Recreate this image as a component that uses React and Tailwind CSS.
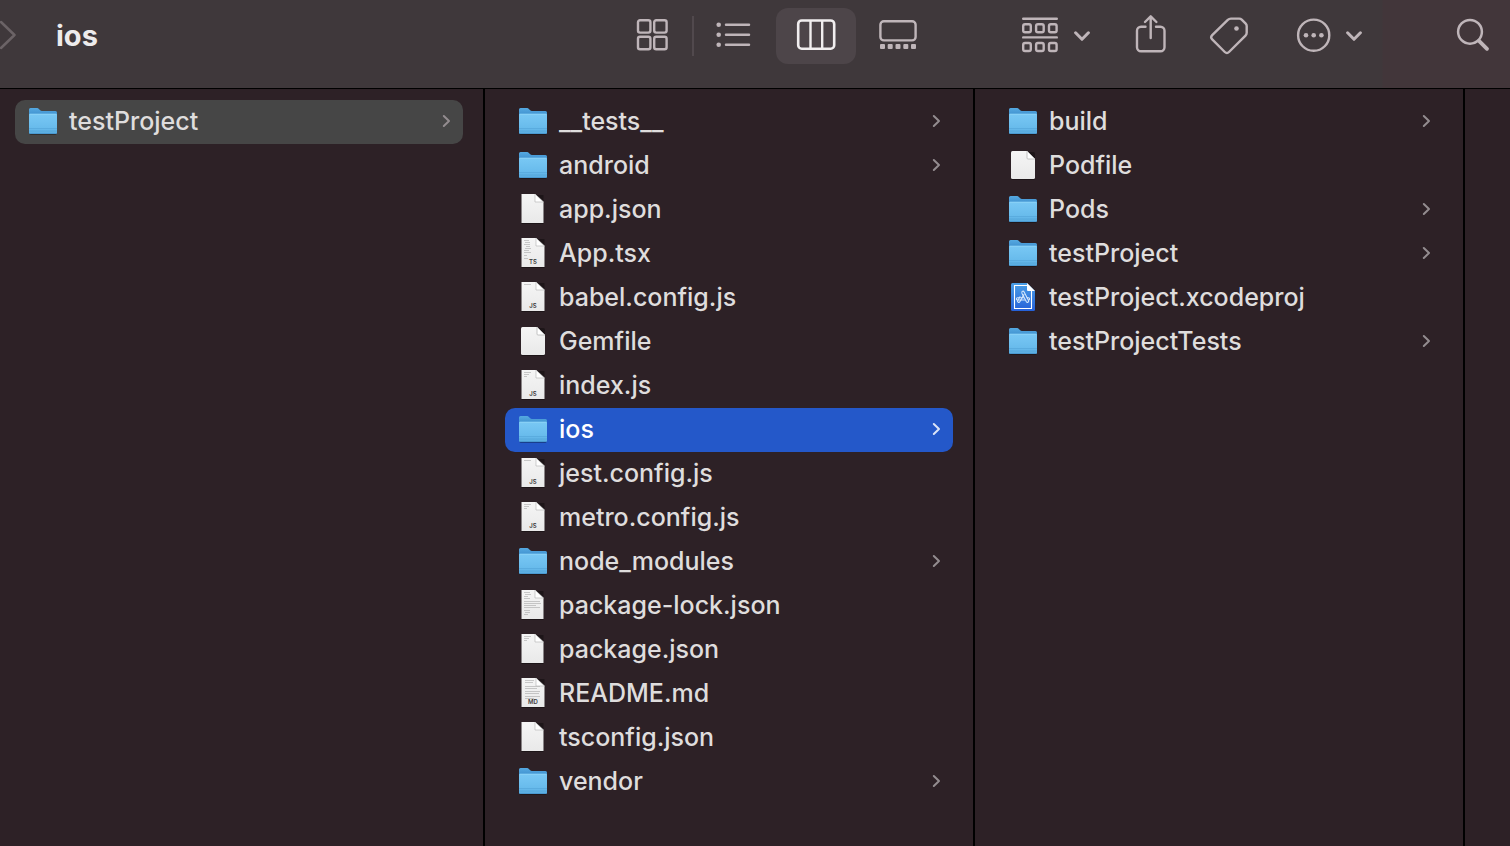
import { useState } from 'react'
import clsx from 'clsx'

const rootItems = [{ name: 'testProject', kind: 'folder' }]

const projectItems = [
  { name: '__tests__', kind: 'folder' },
  { name: 'android', kind: 'folder' },
  { name: 'app.json', kind: 'json' },
  { name: 'App.tsx', kind: 'code', badge: 'TS', preview: 'code' },
  { name: 'babel.config.js', kind: 'code', badge: 'JS', preview: 'short' },
  { name: 'Gemfile', kind: 'plain' },
  { name: 'index.js', kind: 'code', badge: 'JS', preview: 'few' },
  { name: 'ios', kind: 'folder' },
  { name: 'jest.config.js', kind: 'code', badge: 'JS', preview: 'short' },
  { name: 'metro.config.js', kind: 'code', badge: 'JS', preview: 'few' },
  { name: 'node_modules', kind: 'folder' },
  { name: 'package-lock.json', kind: 'json', preview: 'full' },
  { name: 'package.json', kind: 'json', preview: 'few' },
  { name: 'README.md', kind: 'code', badge: 'MD', preview: 'text' },
  { name: 'tsconfig.json', kind: 'json' },
  { name: 'vendor', kind: 'folder' },
]

const iosItems = [
  { name: 'build', kind: 'folder' },
  { name: 'Podfile', kind: 'plain' },
  { name: 'Pods', kind: 'folder' },
  { name: 'testProject', kind: 'folder' },
  { name: 'testProject.xcodeproj', kind: 'xcode' },
  { name: 'testProjectTests', kind: 'folder' },
]

// tiny lines of text on the document thumbnails
const previews = {
  short: 'M5 2.5h7',
  few: 'M5 2.5h7M5 4.5h5M5 6.5h3',
  code: 'M5 2.5h5M6 4.5h5M5 6.5h6M7 8.5h4M6 10.5h6M5 12.5h5M5 14.5h7M5 17.5h3M5 20.5h4',
  full: 'M5 2.5h6M6 4.5h6M5 6.5h4M5 8.5h6M5 11.5h16M5 13.5h17M5 15.5h12M5 17.5h16M5 20.5h6M6 22.5h5M5 24.5h4',
  text: 'M6 2.5h9M6 4.5h8M6 8.5h15M6 10.5h12M6 13.5h15M6 15.5h14M6 18.5h15M6 20.5h9',
}

function Defs() {
  return (
    <svg className="absolute h-0 w-0" aria-hidden="true">
      <defs>
        <linearGradient id="folderFront" x1="0" y1="0" x2="0" y2="1">
          <stop offset="0" stopColor="#79c8f4" />
          <stop offset="0.7" stopColor="#68bbec" />
          <stop offset="1" stopColor="#58abdf" />
        </linearGradient>
        <linearGradient id="folderBack" x1="0" y1="0" x2="0" y2="1">
          <stop offset="0" stopColor="#55a9e1" />
          <stop offset="0.3" stopColor="#3f8fcd" />
          <stop offset="1" stopColor="#3f8fcd" />
        </linearGradient>
        <linearGradient id="paper" x1="0" y1="0" x2="0" y2="1">
          <stop offset="0" stopColor="#f5f5f5" />
          <stop offset="1" stopColor="#e9e9e9" />
        </linearGradient>
        <linearGradient id="blueprint" x1="0" y1="0" x2="0" y2="1">
          <stop offset="0" stopColor="#4a9fe6" />
          <stop offset="1" stopColor="#2560d8" />
        </linearGradient>
      </defs>
    </svg>
  )
}

function FolderIcon() {
  return (
    <>
      <rect x="0.5" y="6" width="27" height="23" rx="1.5" fill="#000" opacity="0.3" />
      <path d="M0 3.5A1.5 1.5 0 0 1 1.5 2h6.200c1 0 1.500.3 2.200 1l1.300 1.200c.5.5 1 .8 1.800.8h13.500A1.500 1.500 0 0 1 28 6.500V27H0z" fill="url(#folderBack)" />
      <path d="M0 9a1.200 1.200 0 0 1 1.200-1.200h25.600A1.200 1.200 0 0 1 28 9v17.500a1.500 1.500 0 0 1-1.500 1.500h-25A1.500 1.500 0 0 1 0 26.500z" fill="url(#folderFront)" />
      <path d="M0.5 8.300h27" stroke="#8fd4f8" strokeWidth="0.8" />
      <path d="M0 22.500h28M0 25h28" stroke="#4a9ad0" strokeWidth="0.6" opacity="0.7" />
      <path d="M0.5 27.500h27" stroke="#4694cb" strokeWidth="0.8" />
    </>
  )
}

function PaperIcon({ width, badge, preview }) {
  const right = 2 + width
  return (
    <>
      <rect x="2.500" y="1" width={width} height="29" fill="#000" opacity="0.35" />
      <path d={`M2.500 0H${right - 8}L${right + 0.5} 8V29H2.500z`} fill="url(#paper)" />
      {preview && <path d={previews[preview]} stroke="#9a9a9a" strokeWidth="0.7" opacity="0.7" />}
      <path d={`M${right - 8} 0V8H${right + 0.5}z`} fill="#fff" stroke="#b9b9b9" strokeWidth="0.7" />
      {badge && (
        <text x="14" y="26" textAnchor="middle" fontSize="6" fontWeight="600" fill="#3c3c3c" className="font-['Inter',sans-serif]">
          {badge}
        </text>
      )}
    </>
  )
}

function PlainIcon() {
  return (
    <>
      <rect x="2" y="2" width="24" height="28" rx="1.5" fill="#000" opacity="0.35" />
      <path d="M3.5 1H18l8 8v18.500a1.500 1.500 0 0 1-1.500 1.500h-21A1.500 1.500 0 0 1 2 27.500v-25A1.500 1.500 0 0 1 3.500 1z" fill="url(#paper)" />
      <path d="M18 1v7a1 1 0 0 0 1 1h7z" fill="#fff" stroke="#b5b5b5" strokeWidth="0.8" />
    </>
  )
}

function XcodeIcon() {
  return (
    <>
      <path d="M3.5 1H18l8 8v18.500a1.500 1.500 0 0 1-1.500 1.500h-21A1.500 1.500 0 0 1 2 27.500v-25A1.500 1.500 0 0 1 3.500 1z" fill="url(#blueprint)" />
      <path d="M18 3.500H5.500v23h17V9" fill="none" stroke="#fff" strokeWidth="1.1" />
      <path d="M18 1v7a1 1 0 0 0 1 1h7z" fill="#fff" />
      <g fill="none" stroke="#d5e8fb" strokeWidth="1.1" strokeLinecap="round">
        <path d="M12.800 10.500a1.200 1.200 0 0 1 2.200-.8L19.500 18.500a1.200 1.200 0 0 1-2.100 1.200L13 11.500" />
        <path d="M15 12.500L10.800 19.700a1.200 1.200 0 0 1-2.100-1.200L11 14.800" />
        <path d="M14.500 15.800H8.500a1.100 1.100 0 0 0 0 2.200h7M18 15.800h1.500a1.100 1.100 0 0 1 0 2.200" />
      </g>
    </>
  )
}

function ItemIcon({ item }) {
  return (
    <svg width="28" height="32" viewBox="0 0 28 32" className="shrink-0" aria-hidden="true">
      {item.kind === 'folder' && <FolderIcon />}
      {item.kind === 'plain' && <PlainIcon />}
      {item.kind === 'xcode' && <XcodeIcon />}
      {item.kind === 'json' && <PaperIcon width={22} preview={item.preview} />}
      {item.kind === 'code' && <PaperIcon width={23} badge={item.badge} preview={item.preview} />}
    </svg>
  )
}

function Row({ item, state, onClick }) {
  return (
    <li>
      <button
        onClick={onClick}
        className={clsx(
          'flex h-11 w-full items-center gap-3 rounded-[10px] pl-3.5 pr-3 text-left text-[25px] font-medium leading-8',
          state === 'active' && 'bg-[#2458c9] text-white',
          state === 'path' && 'bg-[#464646] text-[#dfdddd]',
          !state && 'text-[#dfdddd]'
        )}
      >
        <ItemIcon item={item} />
        <span className="flex-1 whitespace-nowrap pb-0.5">{item.name}</span>
        {item.kind === 'folder' && (
          <svg width="9" height="14" viewBox="0 0 9 14" fill="none" className={clsx('mb-0.5 shrink-0', state === 'active' ? 'text-[#dbe4f7]' : 'text-[#938c8f]')} aria-hidden="true">
            <path d="M1.8 2L7 7L1.8 12" stroke="currentColor" strokeWidth="2" strokeLinecap="round" strokeLinejoin="round" />
          </svg>
        )}
      </button>
    </li>
  )
}

function Column({ items, selected, selectedState, onSelect, className }) {
  return (
    <ul className={clsx('shrink-0 border-r-2 border-black py-[11px] pr-5', className)}>
      {items.map((item) => (
        <Row
          key={item.name}
          item={item}
          state={item.name === selected ? selectedState : null}
          onClick={() => onSelect(item.name)}
        />
      ))}
    </ul>
  )
}

function ChevronDown() {
  return (
    <svg width="18" height="14" viewBox="0 0 18 14" fill="none" stroke="currentColor" strokeWidth="3" strokeLinecap="round" strokeLinejoin="round" aria-hidden="true">
      <path d="M1.6 3.800L8 10.300L14.400 3.800" />
    </svg>
  )
}

const viewIcons = {
  Icons: (
    <g strokeWidth="2.4">
      <rect x="6" y="4.200" width="12.400" height="12.400" rx="2" />
      <rect x="22.200" y="4.200" width="12.400" height="12.400" rx="2" />
      <rect x="6" y="20.800" width="12.400" height="12.400" rx="2" />
      <rect x="22.200" y="20.800" width="12.400" height="12.400" rx="2" />
    </g>
  ),
  List: (
    <>
      <path d="M12 8.800h23M12 18.800h23M12 28.800h23" strokeWidth="2.5" strokeLinecap="round" />
      <g fill="currentColor" stroke="none">
        <circle cx="4.700" cy="8.800" r="2.300" />
        <circle cx="4.700" cy="18.800" r="2.300" />
        <circle cx="4.700" cy="28.800" r="2.300" />
      </g>
    </>
  ),
  Columns: (
    <>
      <rect x="2.200" y="4.500" width="36" height="28.200" rx="3.5" strokeWidth="2.600" />
      <path d="M14.500 4.500v28M26.200 4.500v28" strokeWidth="2.400" />
    </>
  ),
  Gallery: (
    <>
      <rect x="2.400" y="5.200" width="35.200" height="19.200" rx="3.5" strokeWidth="2.400" />
      <g fill="currentColor" stroke="none">
        <rect x="2" y="28" width="5" height="5" rx="1" />
        <rect x="9.700" y="28" width="5" height="5" rx="1" />
        <rect x="17.500" y="28" width="5" height="5" rx="1" />
        <rect x="25.300" y="28" width="5" height="5" rx="1" />
        <rect x="33" y="28" width="5" height="5" rx="1" />
      </g>
    </>
  ),
}

function ViewButton({ name, view, setView }) {
  return (
    <button
      aria-label={name}
      aria-pressed={view === name}
      onClick={() => setView(name)}
      className={clsx('flex h-14 w-20 items-center justify-center rounded-xl', view === name && 'bg-[#4d4549] text-[#f1eeef]')}
    >
      <svg width="40" height="40" viewBox="0 0 40 40" fill="none" stroke="currentColor" aria-hidden="true">
        {viewIcons[name]}
      </svg>
    </button>
  )
}

function Toolbar() {
  const [view, setView] = useState('Columns')

  return (
    <header className="flex h-[89px] items-center border-b border-black bg-[linear-gradient(to_left,#42363a_127px,#3f383b_128px)] pb-4 pr-5 text-[#bfb5b9]">
      <button aria-label="Forward" className="w-[18px] text-[#6b6366]">
        <svg width="18" height="32" viewBox="0 0 18 32" fill="none" stroke="currentColor" strokeWidth="2.5" strokeLinecap="round" strokeLinejoin="round" aria-hidden="true">
          <path d="M1 2L14.500 15L1 28" />
        </svg>
      </button>
      <h1 className="ml-[38px] flex-1 text-[29px] font-bold leading-9 text-[#edebec]">ios</h1>

      <div className="flex items-center">
        <ViewButton name="Icons" view={view} setView={setView} />
        <div className="h-10 w-0.5 bg-[#51494d]" />
        <ViewButton name="List" view={view} setView={setView} />
        <div className="w-0.5" />
        <ViewButton name="Columns" view={view} setView={setView} />
        <div className="w-0.5" />
        <ViewButton name="Gallery" view={view} setView={setView} />
      </div>

      <button aria-label="Group" className="ml-[82px] flex items-center gap-3.5">
        <svg width="40" height="40" viewBox="0 0 40 40" fill="none" stroke="currentColor" strokeWidth="2.4" aria-hidden="true">
          <path d="M3.200 2.700h33.600M3.200 21.400h33.600" strokeLinecap="round" />
          <rect x="3.200" y="8.200" width="7.600" height="8" rx="1.800" />
          <rect x="16.100" y="8.200" width="7.600" height="8" rx="1.800" />
          <rect x="29" y="8.200" width="7.600" height="8" rx="1.800" />
          <rect x="3.200" y="27" width="7.600" height="8" rx="1.800" />
          <rect x="16.100" y="27" width="7.600" height="8" rx="1.800" />
          <rect x="29" y="27" width="7.600" height="8" rx="1.800" />
        </svg>
        <ChevronDown />
      </button>
      <button aria-label="Share" className="ml-[42px]">
        <svg width="34" height="44" viewBox="0 0 34 44" fill="none" stroke="currentColor" strokeWidth="2.4" strokeLinecap="round" strokeLinejoin="round" aria-hidden="true">
          <path d="M11.500 12.700H7a4 4 0 0 0-4 4v16.500a4 4 0 0 0 4 4h19.500a4 4 0 0 0 4-4V16.700a4 4 0 0 0-4-4H22" />
          <path d="M16.700 24V2.500M11 8L16.700 2.300L22.400 8" />
        </svg>
      </button>
      <button aria-label="Tags" className="ml-[41px]">
        <svg width="40" height="40" viewBox="0 0 40 40" fill="none" stroke="currentColor" strokeWidth="2.4" strokeLinejoin="round" aria-hidden="true">
          <path d="M22 2.600h8.200a3.500 3.500 0 0 1 2.500 1l4 4a3.500 3.500 0 0 1 1 2.500v6.700a4 4 0 0 1-1.200 2.800L20 36a3 3 0 0 1-4.200 0L3.200 23.400a3 3 0 0 1 0-4.200L18.800 3.900a4.500 4.500 0 0 1 3.200-1.300z" />
          <circle cx="27.500" cy="12.500" r="2.300" fill="currentColor" stroke="none" />
        </svg>
      </button>
      <button aria-label="More" className="ml-[47px] flex items-center gap-3.5">
        <svg width="36" height="36" viewBox="0 0 36 36" aria-hidden="true">
          <circle cx="17.700" cy="17.200" r="15.600" fill="none" stroke="currentColor" strokeWidth="2.4" />
          <g fill="currentColor">
            <circle cx="10" cy="17.200" r="2.300" />
            <circle cx="17.700" cy="17.200" r="2.300" />
            <circle cx="25.400" cy="17.200" r="2.300" />
          </g>
        </svg>
        <ChevronDown />
      </button>
      <button aria-label="Search" className="ml-[92px]">
        <svg width="34" height="36" viewBox="0 0 34 36" fill="none" stroke="currentColor" strokeLinecap="round" aria-hidden="true">
          <circle cx="14" cy="13.800" r="11.900" strokeWidth="2.500" />
          <path d="M23 22.800L31 30.800" strokeWidth="3.800" />
        </svg>
      </button>
    </header>
  )
}

function App() {
  const [root, setRoot] = useState('testProject')
  const [project, setProject] = useState('ios')
  const [file, setFile] = useState(null)

  return (
    <div className="flex min-h-screen flex-col overflow-hidden bg-[#2d2126] font-['Inter',sans-serif]">
      <Defs />
      <Toolbar />
      <main className="flex flex-1">
        <Column className="w-[485px] pl-[15px]" items={rootItems} selected={root} selectedState="path" onSelect={setRoot} />
        <Column className="w-[490px] pl-5" items={projectItems} selected={project} selectedState="active" onSelect={setProject} />
        <Column className="w-[490px] pl-5" items={iosItems} selected={file} selectedState="active" onSelect={setFile} />
      </main>
    </div>
  )
}

export default App
